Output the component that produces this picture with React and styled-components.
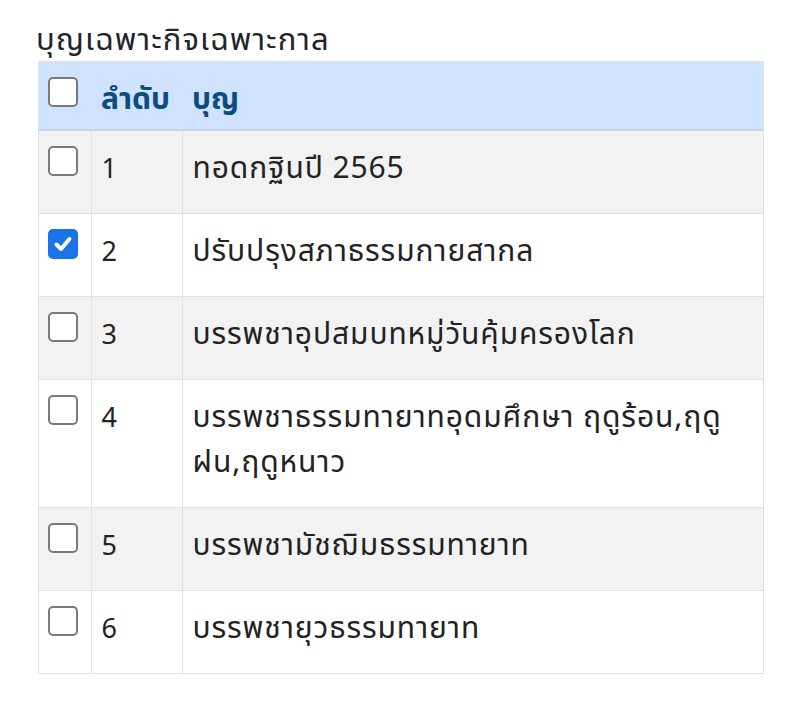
import React from "react";
import styled, { createGlobalStyle } from "styled-components";

const Global = createGlobalStyle`
  html, body { margin: 0; padding: 0; background: #ffffff; }
  body { font-family: "Noto Sans Thai", "Noto Sans", "Open Sans", sans-serif; color: #212529; }
`;

const Page = styled.div`
  padding: 21px 36px 0 38px;
  display: flex;
  flex-direction: column;
`;

const Title = styled.div`
  font-size: 31px;
  line-height: 40px;
  letter-spacing: 1.1px;
  color: #212529;
  margin-left: -2px;
`;

const Table = styled.table`
  width: 726px;
  border-collapse: collapse;
  font-size: 30px;
  line-height: 45px;
  border: 1px solid #dee2e6;
`;

const HeadRow = styled.tr`
  background: #cfe2ff;
  border-bottom: 2px solid #c9d6e3;
`;

const Th = styled.th`
  text-align: left;
  vertical-align: top;
  padding: 16px 10px 6px;
  color: #0b4d7e;
  font-weight: 700;
  width: ${(p) => p.$w || "auto"};
`;

const Row = styled.tr`
  background: ${(p) => (p.$striped ? "#f2f2f2" : "#ffffff")};
  border-bottom: 1px solid #dee2e6;
`;

const Td = styled.td`
  vertical-align: top;
  padding: 16px 10px 21px;
  border-left: 1px solid #dee2e6;
  color: #222222;
  letter-spacing: ${(p) => (p.$wide ? "0.9px" : "0")};
  &:first-child { border-left: none; }
`;

const Num = styled.span`
  font-size: 27px;
`;

const Box = styled.span`
  width: 30px;
  height: 30px;
  box-sizing: border-box;
  border-radius: 5px;
  border: 2px solid ${(p) => (p.$checked ? "#1a73e8" : "#7a7a7a")};
  background: ${(p) => (p.$checked ? "#1a73e8" : "#ffffff")};
  display: flex;
  align-items: center;
  justify-content: center;
`;

const CheckCell = styled.div`
  display: flex;
  margin-left: -1px;
  margin-top: -1px;
`;

function Checkbox({ checked }) {
  return (
    <CheckCell>
      <Box $checked={checked}>
        {checked && (
          <svg width="22" height="22" viewBox="0 0 22 22">
            <path d="M4.5 11.5 L9 16 L17.5 6" fill="none" stroke="#ffffff" strokeWidth="4" strokeLinecap="round" strokeLinejoin="round" />
          </svg>
        )}
      </Box>
    </CheckCell>
  );
}

const rows = [
  { n: 1, t: "ทอดกฐินปี 2565" },
  { n: 2, t: "ปรับปรุงสภาธรรมกายสากล", checked: true },
  { n: 3, t: "บรรพชาอุปสมบทหมู่วันคุ้มครองโลก" },
  { n: 4, t: "บรรพชาธรรมทายาทอุดมศึกษา ฤดูร้อน,ฤดูฝน,ฤดูหนาว" },
  { n: 5, t: "บรรพชามัชฌิมธรรมทายาท" },
  { n: 6, t: "บรรพชายุวธรรมทายาท" },
];

export default function App() {
  return (
    <Page>
      <Global />
      <Title>บุญเฉพาะกิจเฉพาะกาล</Title>
      <Table>
        <thead>
          <HeadRow>
            <Th $w="32px"><Checkbox /></Th>
            <Th $w="71px">ลำดับ</Th>
            <Th>บุญ</Th>
          </HeadRow>
        </thead>
        <tbody>
          {rows.map((r, i) => (
            <Row key={r.n} $striped={i % 2 === 0}>
              <Td><Checkbox checked={r.checked} /></Td>
              <Td><Num>{r.n}</Num></Td>
              <Td $wide>{r.t}</Td>
            </Row>
          ))}
        </tbody>
      </Table>
    </Page>
  );
}
